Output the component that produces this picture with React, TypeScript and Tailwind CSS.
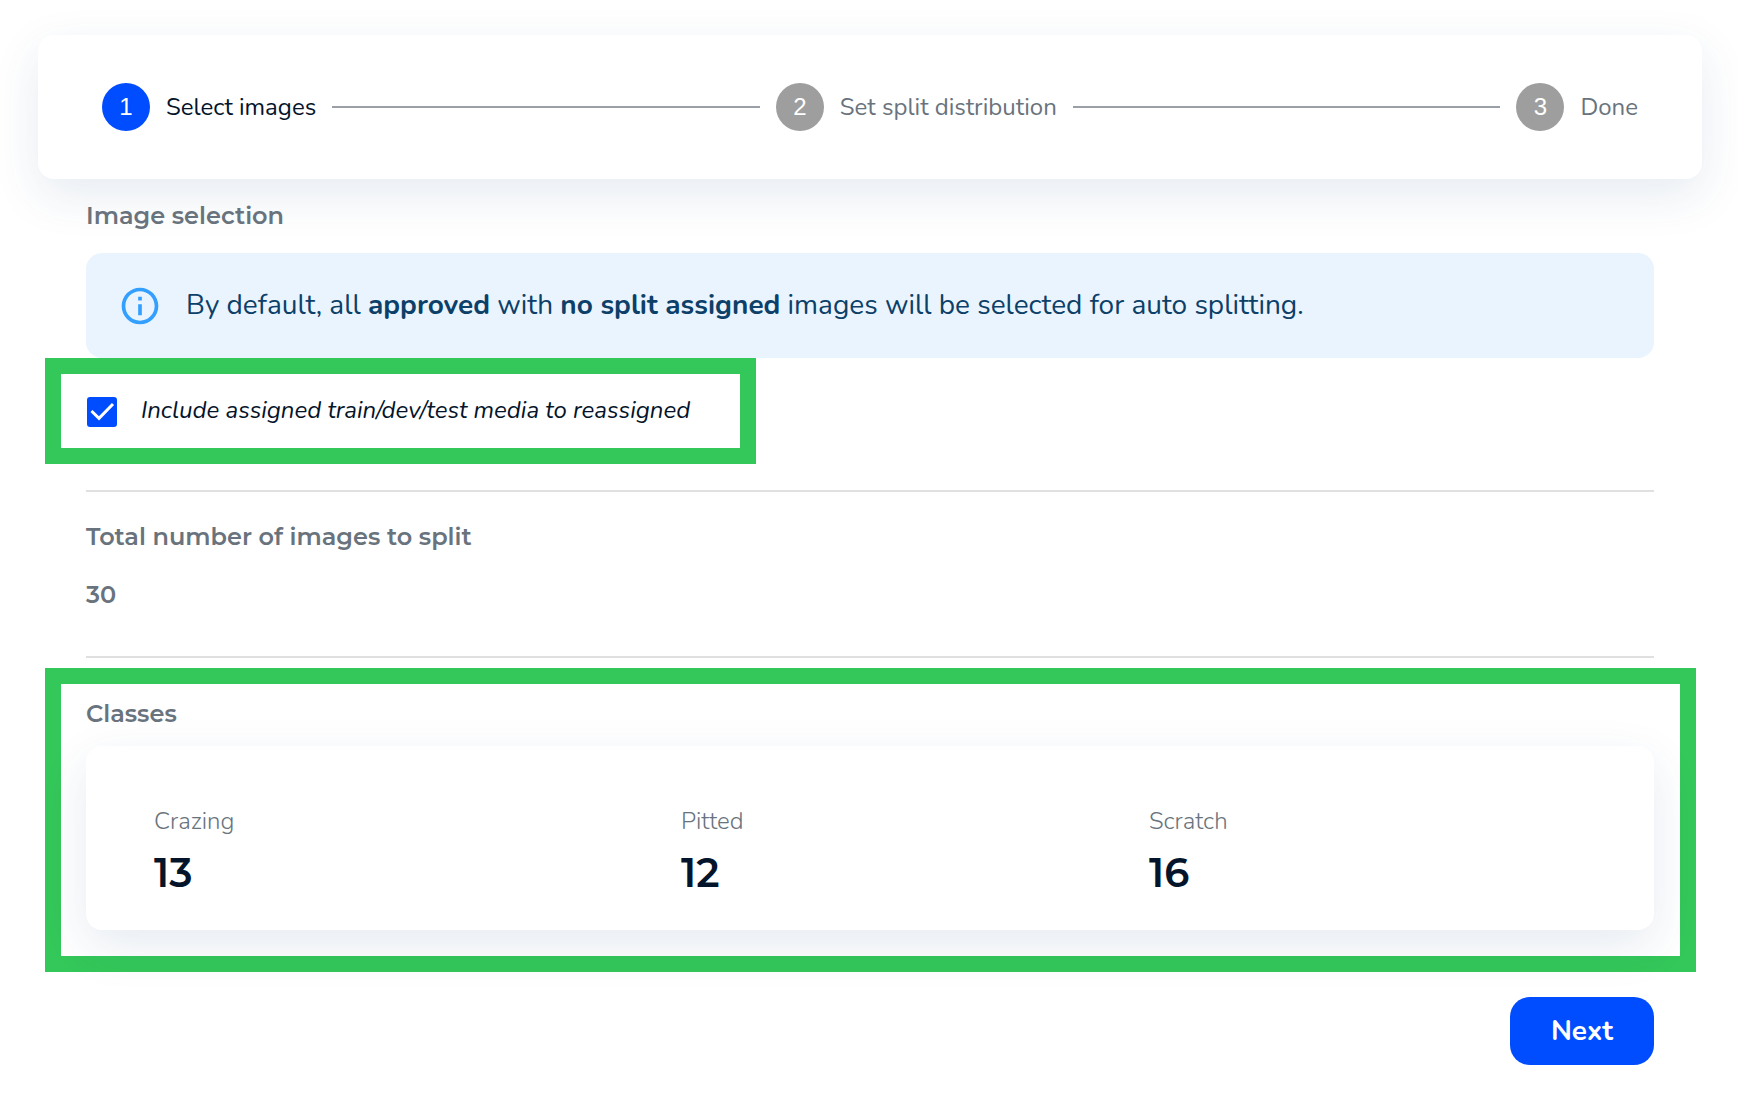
import { Fragment, useState } from "react";
import { MdInfoOutline } from "react-icons/md";

const STEPS = ["Select images", "Set split distribution", "Done"];

const CLASSES = [
  { name: "Crazing", count: 13 },
  { name: "Pitted", count: 12 },
  { name: "Scratch", count: 16 },
];

const CARD = "bg-white rounded-2xl shadow-[0_16px_48px_rgba(30,70,130,0.11)]";
const HEADING = "font-['Montserrat','Inter',sans-serif] text-2xl font-semibold text-[#69737d]";

function Stepper({ active }: { active: number }) {
  return (
    <ol className={`${CARD} flex items-center gap-4 px-16 py-12`}>
      {STEPS.map((label, i) => (
        <Fragment key={label}>
          {i > 0 && <li aria-hidden="true" className="h-0.5 flex-1 bg-[#9a9fa8]" />}
          <li className="flex items-center gap-4" aria-current={i === active ? "step" : undefined}>
            <span
              className={`flex size-12 items-center justify-center rounded-full font-['Liberation_Sans',sans-serif] text-2xl text-white ${
                i === active ? "bg-[#004cff]" : "bg-[#9e9e9e]"
              }`}
            >
              {i + 1}
            </span>
            <span className={`text-2xl ${i === active ? "text-[#04142a]" : "text-[#69737d]"}`}>
              {label}
            </span>
          </li>
        </Fragment>
      ))}
    </ol>
  );
}

export default function App() {
  const [include, setInclude] = useState(true);

  return (
    <main className="bg-white pt-[35px] pr-9 pb-7 pl-[38px] font-['Nunito','Noto_Sans',sans-serif]">
      <Stepper active={0} />

      <section className="px-12 pt-[21px]">
        <h2 className={HEADING}>Image selection</h2>
        <div className="mt-[21px] flex items-center gap-6 rounded-2xl bg-[#e9f4fe] px-8 py-[30px] text-[28px] leading-[45px] text-[#0c4068]">
          <MdInfoOutline className="size-11 shrink-0 text-[#339fff]" />
          <p>
            By default, all <strong className="font-bold">approved</strong> with{" "}
            <strong className="font-bold">no split assigned</strong> images will be selected for
            auto splitting.
          </p>
        </div>
      </section>

      <div className="ml-[7px] w-fit border-16 border-[#34c759] pt-[23px] pr-[50px] pb-[21px] pl-[26px]">
        <label className="flex items-start gap-6 text-2xl leading-[26px] text-[#04142a] italic">
          <span className="relative size-[30px]">
            <input
              type="checkbox"
              checked={include}
              onChange={(e) => setInclude(e.target.checked)}
              className="block size-full appearance-none rounded-[3px] border-2 border-[#004cff] checked:bg-[#004cff]"
            />
            {include && (
              <svg
                viewBox="0 0 30 30"
                className="pointer-events-none absolute inset-0 fill-none stroke-white stroke-3"
              >
                <path d="M4.500 14L12 21.300L26 7" />
              </svg>
            )}
          </span>
          Include assigned train/dev/test media to reassigned
        </label>
      </div>

      <section className="mx-12 mt-[26px] border-y-2 border-[#e0e0e0] pt-[29px] pb-[45px]">
        <h2 className={HEADING}>Total number of images to split</h2>
        <p className={`${HEADING} mt-[26px]`}>30</p>
      </section>

      <section className="mt-2.5 mr-1.5 ml-[7px] border-16 border-[#34c759] pt-3.5 pr-[26px] pb-[26px] pl-[25px]">
        <h2 className={HEADING}>Classes</h2>
        <dl className={`${CARD} mt-4 grid grid-cols-[527fr_468fr_437fr] px-[68px] pt-[59px] pb-[33px]`}>
          {CLASSES.map((c) => (
            <div key={c.name}>
              <dt className="text-2xl font-light text-[#69737d]">{c.name}</dt>
              <dd className="mt-3 font-['Montserrat','Inter',sans-serif] text-[40px] leading-12 font-semibold text-[#04142a]">
                {c.count}
              </dd>
            </div>
          ))}
        </dl>
      </section>

      <div className="mt-[25px] flex justify-end px-12">
        <button
          type="button"
          className="rounded-[20px] bg-[#004cff] px-[41px] py-3.5 text-[28px] leading-10 font-bold text-white"
        >
          Next
        </button>
      </div>
    </main>
  );
}
